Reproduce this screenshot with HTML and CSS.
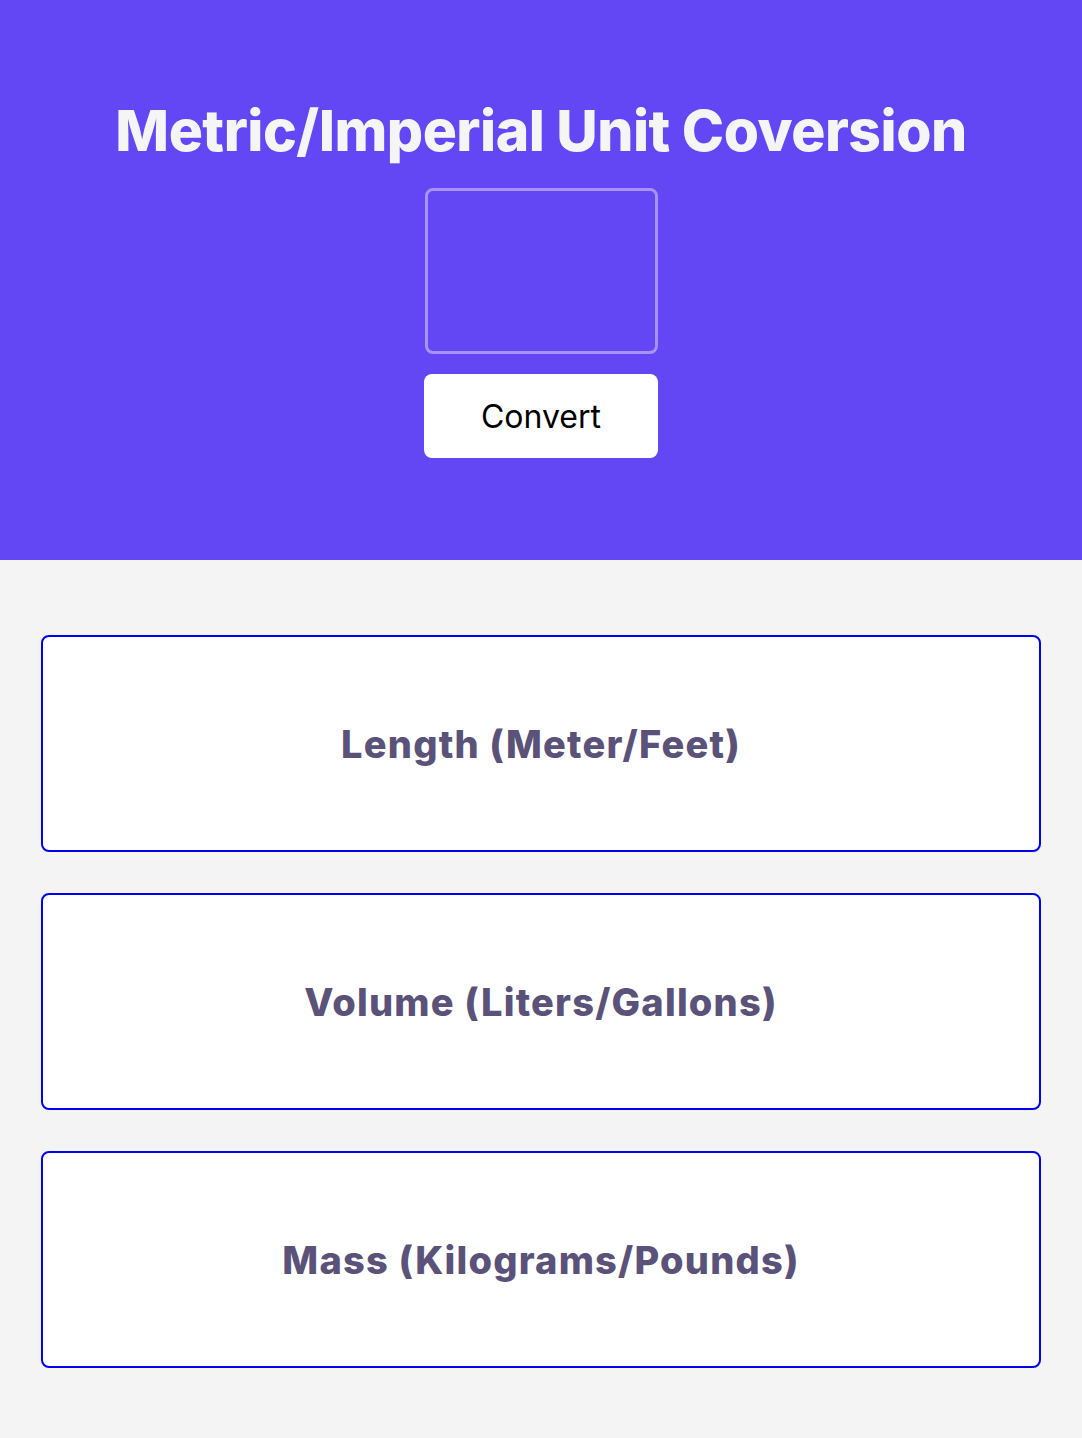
FILE: index.html
```html
<!DOCTYPE html>
<html lang="en">
<head>
<meta charset="utf-8">
<title>Metric/Imperial Unit Coversion</title>
<link rel="stylesheet" href="styles.css">
</head>
<body>
<header class="hero">
  <h1 class="hero-title">Metric/Imperial Unit Coversion</h1>
  <textarea class="hero-input"></textarea>
  <button class="hero-btn">Convert</button>
</header>
<main class="results">
  <section class="card"><h2 class="card-title">Length (Meter/Feet)</h2></section>
  <section class="card"><h2 class="card-title">Volume (Liters/Gallons)</h2></section>
  <section class="card"><h2 class="card-title">Mass (Kilograms/Pounds)</h2></section>
</main>
</body>
</html>
```
FILE: styles.css
```css
* { box-sizing: border-box; }
html, body { margin: 0; padding: 0; }
body {
  background: #f4f4f4;
  font-family: Inter, "Noto Sans", sans-serif;
}
.hero {
  background: #6347f5;
  height: 560px;
  display: flex;
  flex-direction: column;
  align-items: center;
  padding-top: 96px;
}
.hero-title {
  margin: 0;
  color: #f5f5f5;
  font-size: 57px;
  font-weight: 800;
  line-height: 70px;
  letter-spacing: -0.5px;
}
.hero-input {
  margin-top: 22px;
  width: 233px;
  height: 166px;
  background: transparent;
  border: 3px solid #a692f8;
  border-radius: 8px;
  resize: none;
  outline: none;
}
.hero-btn {
  margin-top: 20px;
  width: 234px;
  height: 84px;
  background: #fff;
  border: none;
  border-radius: 8px;
  font-family: Inter, sans-serif;
  font-size: 32px;
  color: #000;
}
.results {
  max-width: 1000px;
  margin: 0 auto;
  padding: 75px 0 70px;
  display: flex;
  flex-direction: column;
  gap: 41px;
}
.card {
  height: 217px;
  background: #fff;
  border: 2px solid #0000ee;
  border-radius: 8px;
  display: flex;
  align-items: center;
  justify-content: center;
}
.card-title {
  margin: 0;
  color: #5a5278;
  font-size: 38px;
  font-weight: 800;
  letter-spacing: 1.2px;
}
```
